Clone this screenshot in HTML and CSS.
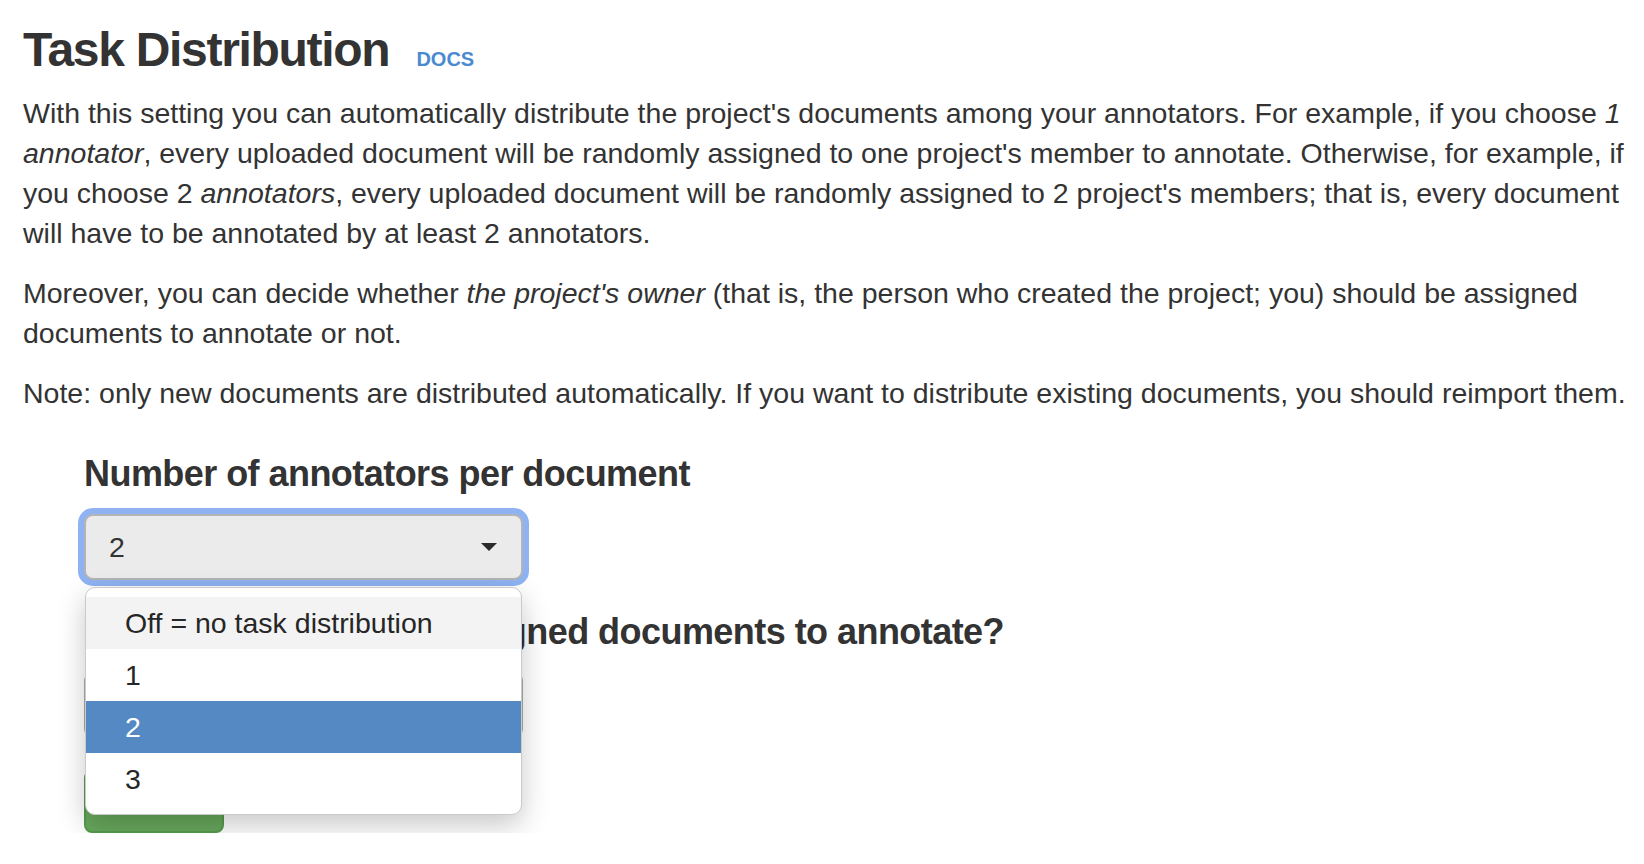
FILE: index.html
```html
<!DOCTYPE html>
<html lang="en">
<head>
<meta charset="utf-8">
<title>Task Distribution</title>
<link rel="stylesheet" href="styles.css">
</head>
<body>
<div class="page">
  <h3 class="title">Task Distribution <a class="docs" href="#">DOCS</a></h3>
  <p>With this setting you can automatically distribute the project's documents among your annotators. For example, if you choose <em>1 annotator</em>, every uploaded document will be randomly assigned to one project's member to annotate. Otherwise, for example, if you choose 2 <em>annotators</em>, every uploaded document will be randomly assigned to 2 project's members; that is, every document will have to be annotated by at least 2 annotators.</p>
  <p>Moreover, you can decide whether <em>the project's owner</em> (that is, the person who created the project; you) should be assigned documents to annotate or not.</p>
  <p>Note: only new documents are distributed automatically. If you want to distribute existing documents, you should reimport them.</p>

  <form class="form">
    <div class="group">
      <label class="label">Number of annotators per document</label>
      <div class="select-wrap">
        <div class="select focused">
          <span class="value">2</span>
          <svg class="caret" width="16" height="8" viewBox="0 0 16 8"><path d="M0 0 H16 L8 8 Z" fill="#2b2b2b"/></svg>
        </div>
        <ul class="menu">
          <li class="opt hover">Off = no task distribution</li>
          <li class="opt">1</li>
          <li class="opt selected">2</li>
          <li class="opt">3</li>
        </ul>
      </div>
    </div>
    <div class="group">
      <label class="label">Should the owner be assigned documents to annotate?</label>
      <div class="select">
        <span class="value">No</span>
        <svg class="caret" width="16" height="8" viewBox="0 0 16 8"><path d="M0 0 H16 L8 8 Z" fill="#2b2b2b"/></svg>
      </div>
    </div>
    <button class="btn" type="button">Save</button>
  </form>
</div>
</body>
</html>
```

FILE: styles.css
```css
html, body {
  margin: 0;
  padding: 0;
  background: #ffffff;
}

body {
  font-family: "Liberation Sans", Arial, Helvetica, sans-serif;
  font-size: 28.5px;
  line-height: 40px;
  color: #333333;
}

.page {
  padding: 0 8px 0 23px;
}

.title {
  font-size: 48px;
  line-height: 52px;
  font-weight: bold;
  letter-spacing: -1.3px;
  margin: 24px 0 8px;
  color: #333333;
}

.docs {
  font-size: 20px;
  letter-spacing: 0;
  font-weight: bold;
  color: #4a8ad0;
  text-decoration: none;
  margin-left: 15px;
}

p {
  margin: 0 0 20px;
}

.form {
  padding-left: 61px;
  padding-top: 1px;
}

.group {
  margin-top: 20px;
}

.group + .group {
  margin-top: 32px;
}

.label {
  display: block;
  font-size: 36px;
  line-height: 40px;
  font-weight: bold;
  letter-spacing: -0.55px;
  margin-bottom: 20px;
}

.select-wrap {
  position: relative;
  width: 439px;
}

.select {
  box-sizing: border-box;
  width: 439px;
  height: 66px;
  border: 2px solid #ababab;
  border-radius: 9px;
  background: #ebebeb;
  display: flex;
  align-items: center;
  justify-content: space-between;
  padding: 0 24px 0 23px;
}

.select.focused {
  border-color: #b4b4b4;
  box-shadow: 0 0 0 6px #8fb3f2;
}

.caret {
  display: block;
}

.menu {
  position: absolute;
  z-index: 5;
  top: calc(100% + 7px);
  left: 1px;
  right: 1px;
  margin: 0;
  padding: 9px 0 9px;
  list-style: none;
  background: #ffffff;
  border: 1px solid #cacaca;
  border-radius: 10px;
  box-shadow: 0 10px 28px rgba(0, 0, 0, 0.22);
}

.opt {
  height: 52px;
  line-height: 52px;
  padding-left: 39px;
  color: #262626;
}

.opt.hover {
  background: #f3f3f3;
}

.opt.selected {
  background: #5489c4;
  color: #ffffff;
}

.btn {
  margin-top: 32px;
  box-sizing: border-box;
  width: 140px;
  height: 63px;
  border: 2px solid #559c4c;
  border-radius: 8px;
  background: #68a85c;
  color: #ffffff;
  font-family: inherit;
  font-size: 28.5px;
}
```
